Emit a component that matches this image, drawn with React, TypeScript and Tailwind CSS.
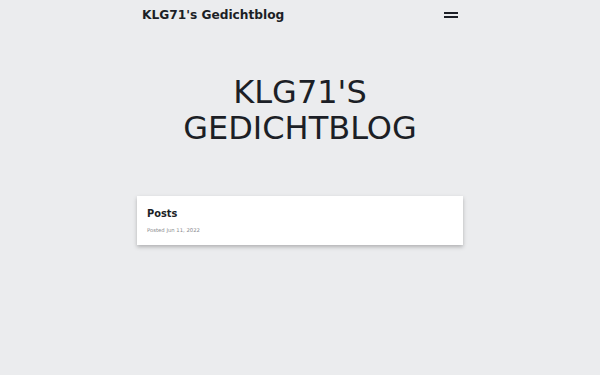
import React from "react";

export default function App() {
  return (
    <div
      className="min-h-[375px] w-full bg-[#ebecee] text-[#1c1f26]"
      style={{ fontFamily: '"DejaVu Sans", sans-serif' }}
    >
      <div className="mx-auto w-[326px]">
        <header className="flex h-[30px] items-center justify-between px-[5px]">
          <span className="text-[12.2px] font-bold leading-none">KLG71's Gedichtblog</span>
          <button className="flex h-[14px] w-[14px] flex-col justify-center gap-[2px]">
            <span className="block h-[2px] w-[14px] bg-[#1c1f26]" />
            <span className="block h-[2px] w-[14px] bg-[#1c1f26]" />
          </button>
        </header>
        <h1 className="mt-[44px] text-center text-[32px] font-normal uppercase leading-[36px]">
          KLG71's<br />Gedichtblog
        </h1>
        <div className="mt-[50px] h-[49px] bg-white px-[10px] pt-[11px] shadow-[0_2px_4px_rgba(0,0,0,0.25)]">
          <div className="text-[9.8px] font-bold leading-[13px]">Posts</div>
          <div className="mt-[6px] text-[5.3px] leading-[8px] text-[#8a8c90]">Posted Jun 11, 2022</div>
        </div>
      </div>
    </div>
  );
}
